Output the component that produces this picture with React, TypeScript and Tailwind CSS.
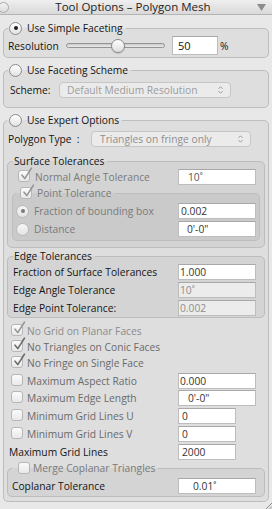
import React from "react";

function Radio({ checked, dim }: { checked?: boolean; dim?: boolean }) {
  return (
    <span
      className={`inline-flex h-[13px] w-[13px] shrink-0 items-center justify-center rounded-full border ${
        dim ? "border-[#b9b9b9] bg-gradient-to-b from-[#f6f6f6] to-[#e3e3e3]" : "border-[#8c8c8c] bg-gradient-to-b from-white to-[#e2e2e2]"
      }`}
    >
      {checked && <span className={`h-[4px] w-[4px] rounded-full ${dim ? "bg-[#7a7a7a]" : "bg-[#1e1e1e]"}`} />}
    </span>
  );
}

function Check({ checked, dark }: { checked?: boolean; dark?: boolean }) {
  return (
    <span className="relative inline-flex h-[12px] w-[12px] shrink-0 rounded-[3px] border border-[#b6b6b6] bg-gradient-to-b from-[#fbfbfb] to-[#e9e9e9]">
      {checked && (
        <svg className="absolute left-[1px] top-[-4px]" width="13" height="14" viewBox="0 0 13 14">
          <path
            d="M2 8.2 L4.8 11.6 L11.4 1.2"
            fill="none"
            stroke={dark ? "#6c6c6c" : "#979797"}
            strokeWidth="1.6"
            strokeLinecap="round"
            strokeLinejoin="round"
          />
        </svg>
      )}
    </span>
  );
}

function Field({ children, cls, disabled }: { children: React.ReactNode; cls: string; disabled?: boolean }) {
  return (
    <div
      className={`flex h-[16px] shrink-0 items-center whitespace-pre border border-[#bdbdbd] border-t-[#a8a8a8] leading-none ${
        disabled ? "bg-[#ececec] text-[#8c8c8c]" : "bg-white text-[#333]"
      } ${cls}`}
    >
      {children}
    </div>
  );
}

function Arrows() {
  return (
    <svg width="7" height="10" viewBox="0 0 7 10" className="shrink-0">
      <path d="M1.5 3.8 L3.5 1.8 L5.5 3.8" fill="none" stroke="#9a9a9a" strokeWidth="1" />
      <path d="M1.5 6.2 L3.5 8.2 L5.5 6.2" fill="none" stroke="#9a9a9a" strokeWidth="1" />
    </svg>
  );
}

const fs = "border border-[#bdbdbd] rounded-[5px] bg-black/[0.045] min-w-0";

export default function App() {
  return (
    <div className="flex h-[509px] w-[272px] flex-col overflow-hidden bg-[#e8e8e8] font-['Open_Sans','Liberation_Sans',sans-serif] text-[10.25px] leading-[14px] text-[#141414]">
      {/* title bar */}
      <div className="flex h-[15px] shrink-0 items-center border-b border-[#b4b4b4] bg-gradient-to-b from-[#efefef] to-[#d9d9d9]">
        <span className="ml-[-2px] h-[11px] w-[11px] shrink-0 rounded-full border border-[#a9a9a9] bg-gradient-to-b from-[#f2f2f2] to-[#dcdcdc]" />
        <div className="flex-1 text-center text-[11.5px] leading-[14px] text-[#222]">Tool Options – Polygon Mesh</div>
        <svg width="9" height="7" viewBox="0 0 9 7" className="mr-[6px] shrink-0">
          <path d="M0 0 H9 L4.5 7 Z" fill="#8c8c8c" />
        </svg>
      </div>

      {/* group 1 */}
      <fieldset className={`${fs} mx-[3px] mt-[6px] pb-[2px] pl-[4px] pr-[4px]`}>
        <legend className="flex h-[14px] items-center pl-[1px] pr-[3px]">
          <Radio checked />
          <span className="ml-[5px]">Use Simple Faceting</span>
        </legend>
        <div className="mt-[1px] flex h-[19px] items-center">
          <div className="w-[58px]">Resolution</div>
          <div className="relative flex h-[14px] w-[99px] items-center">
            <div className="h-[5px] w-full rounded-full border border-[#949494] bg-gradient-to-b from-[#c9c9c9] to-[#ececec]" />
            <span className="absolute left-[45px] top-0 h-[14px] w-[14px] rounded-full border border-[#8a8a8a] bg-gradient-to-b from-white to-[#dedede] shadow-[0_1px_1px_rgba(0,0,0,0.15)]" />
          </div>
          <Field cls="ml-[7px] h-[19px] w-[46px] pl-[5px] text-[11px] !text-[#111]">50</Field>
          <span className="ml-[2px]">%</span>
        </div>
      </fieldset>

      {/* group 2 */}
      <fieldset className={`${fs} mx-[3px] mt-[5px] pb-[9px] pl-[4px] pr-[4px]`}>
        <legend className="flex h-[14px] items-center pl-[1px] pr-[3px]">
          <Radio />
          <span className="ml-[5px]">Use Faceting Scheme</span>
        </legend>
        <div className="mt-[5px] flex h-[16px] items-center">
          <div className="ml-[2px] w-[49px]">Scheme:</div>
          <div className="flex h-[16px] w-[172px] items-center rounded-[4px] border border-[#c6c6c6] bg-[#ebebeb] pl-[7px] pr-[6px] text-[#9c9c9c]">
            <span className="flex-1">Default Medium Resolution</span>
            <Arrows />
          </div>
        </div>
      </fieldset>

      {/* group 3 */}
      <fieldset className={`${fs} mx-[3px] mt-[5px] pb-[4px] pl-[3px] pr-[3px]`}>
        <legend className="flex h-[14px] items-center pl-[2px] pr-[3px]">
          <Radio />
          <span className="ml-[5px]">Use Expert Options</span>
        </legend>
        <div className="mt-[4px] flex h-[16px] items-center">
          <div className="ml-[1px] w-[83px] whitespace-pre">Polygon Type  :</div>
          <div className="flex h-[16px] w-[160px] items-center rounded-[4px] border border-[#c6c6c6] bg-[#ebebeb] pl-[8px] pr-[6px] text-[#8e8e8e]">
            <span className="flex-1">Triangles on fringe only</span>
            <Arrows />
          </div>
        </div>

        {/* surface tolerances */}
        <fieldset className={`${fs} mt-[7px] pb-[6px] pl-[4px] pr-[4px]`}>
          <legend className="flex h-[14px] items-center pl-[2px] pr-[3px]">Surface Tolerances</legend>
          <div className="mt-[1px] flex h-[16px] items-center">
            <div className="flex w-[166px] items-center">
              <span className="ml-[6px]">
                <Check checked />
              </span>
              <span className="ml-[5px] text-[#7a7a7a]">Normal Angle Tolerance</span>
            </div>
            <Field cls="w-[78px] pl-[9px] !text-[#555]">10˚</Field>
          </div>

          <fieldset className={`${fs} mt-[1px] pb-[3px] pl-[3px] pr-[3px]`}>
            <legend className="flex h-[14px] items-center pl-[4px] pr-[3px]">
              <Check checked />
              <span className="ml-[5px] text-[#7a7a7a]">Point Tolerance</span>
            </legend>
            <div className="mt-[3px] flex h-[16px] items-center">
              <div className="flex w-[162px] items-center">
                <Radio checked dim />
                <span className="ml-[5px] text-[#7a7a7a]">Fraction of bounding box</span>
              </div>
              <Field cls="w-[78px] pl-[2px]">0.002</Field>
            </div>
            <div className="mt-[2px] flex h-[16px] items-center">
              <div className="flex w-[162px] items-center">
                <Radio dim />
                <span className="ml-[5px] text-[#7a7a7a]">Distance</span>
              </div>
              <Field cls="w-[78px] pl-[8px]">0'-0"</Field>
            </div>
          </fieldset>
        </fieldset>

        {/* edge tolerances */}
        <fieldset className={`${fs} mt-[1px] pb-[1px] pl-[5px] pr-[4px]`}>
          <legend className="flex h-[14px] items-center pl-[1px] pr-[3px]">Edge Tolerances</legend>
          <div className="mt-[1px] flex h-[16px] items-center">
            <div className="w-[165px]">Fraction of Surface Tolerances</div>
            <Field cls="w-[78px] pl-[1px]">1.000</Field>
          </div>
          <div className="mt-[2px] flex h-[16px] items-center">
            <div className="w-[165px]">Edge Angle Tolerance</div>
            <Field disabled cls="w-[78px] pl-[1px]">10˚</Field>
          </div>
          <div className="mt-[2px] flex h-[16px] items-center">
            <div className="w-[165px]">Edge Point Tolerance:</div>
            <Field disabled cls="w-[78px] pl-[1px]">0.002</Field>
          </div>
        </fieldset>

        {/* checkbox list */}
        <div className="mt-[5px] flex h-[16px] items-center">
          <span className="ml-[4px]">
            <Check checked />
          </span>
          <span className="ml-[4px] text-[#8c8c8c]">No Grid on Planar Faces</span>
        </div>
        <div className="flex h-[16px] items-center">
          <span className="ml-[4px]">
            <Check checked dark />
          </span>
          <span className="ml-[4px] text-[#6a6a6a]">No Triangles on Conic Faces</span>
        </div>
        <div className="flex h-[16px] items-center">
          <span className="ml-[4px]">
            <Check checked dark />
          </span>
          <span className="ml-[4px] text-[#6a6a6a]">No Fringe on Single Face</span>
        </div>
        <div className="mt-[2px] flex h-[16px] items-center">
          <div className="flex w-[171px] items-center">
            <span className="ml-[4px]">
              <Check />
            </span>
            <span className="ml-[4px] text-[#6a6a6a]">Maximum Aspect Ratio</span>
          </div>
          <Field cls="w-[78px] pl-[1px]">0.000</Field>
        </div>
        <div className="mt-[1px] flex h-[16px] items-center">
          <div className="flex w-[171px] items-center">
            <span className="ml-[4px]">
              <Check />
            </span>
            <span className="ml-[4px] text-[#6a6a6a]">Maximum Edge Length</span>
          </div>
          <Field cls="w-[78px] pl-[9px]">0'-0"</Field>
        </div>
        <div className="mt-[2px] flex h-[16px] items-center">
          <div className="flex w-[171px] items-center">
            <span className="ml-[4px]">
              <Check />
            </span>
            <span className="ml-[4px] text-[#6a6a6a]">Minimum Grid Lines U</span>
          </div>
          <Field cls="w-[58px] pl-[3px]">0</Field>
        </div>
        <div className="mt-[2px] flex h-[16px] items-center">
          <div className="flex w-[171px] items-center">
            <span className="ml-[4px]">
              <Check />
            </span>
            <span className="ml-[4px] text-[#6a6a6a]">Minimum Grid Lines V</span>
          </div>
          <Field cls="w-[58px] pl-[3px]">0</Field>
        </div>
        <div className="mt-[2px] flex h-[16px] items-center">
          <div className="ml-[2px] w-[169px]">Maximum Grid Lines</div>
          <Field cls="w-[58px] pl-[3px]">2000</Field>
        </div>

        {/* merge coplanar */}
        <fieldset className={`${fs} mt-[1px] pb-[2px] pl-[4px] pr-[4px]`}>
          <legend className="flex h-[14px] items-center pl-[6px] pr-[3px]">
            <Check />
            <span className="ml-[3px] text-[#7a7a7a]">Merge Coplanar Triangles</span>
          </legend>
          <div className="mt-[3px] flex h-[16px] items-center">
            <div className="w-[166px]">Coplanar Tolerance</div>
            <Field cls="w-[78px] pl-[14px]">0.01˚</Field>
          </div>
        </fieldset>
      </fieldset>

      {/* bottom strip with resize grip */}
      <div className="flex flex-1 items-end justify-end">
        <svg width="10" height="10" viewBox="0 0 10 10">
          <path d="M1 10 L10 1 M4.5 10 L10 4.5 M8 10 L10 8" stroke="#8a8a8a" strokeWidth="1" />
        </svg>
      </div>
    </div>
  );
}
